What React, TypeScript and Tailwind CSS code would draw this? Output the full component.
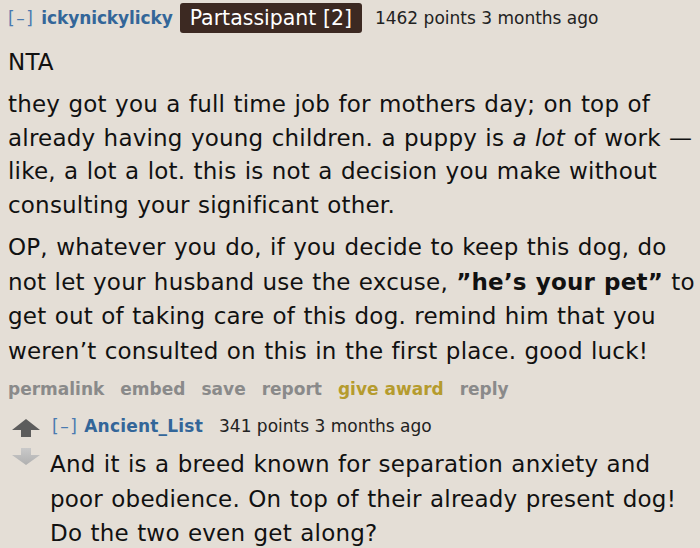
import React from "react";

function Lines({ lines, className }: { lines: React.ReactNode[]; className?: string }) {
  return (
    <p className={className}>
      {lines.map((l, i) => (
        <span key={i} className="block whitespace-nowrap">
          {l}
        </span>
      ))}
    </p>
  );
}

export default function App() {
  return (
    <div className="w-[700px] h-[548px] overflow-hidden bg-[#e4ded6] text-[#111] font-['DejaVu_Sans',Verdana,sans-serif]">
      <div className="pl-[8px] pt-[3px]">
        <div className="flex items-center h-[30px] text-[17px] leading-[24px]">
          <span className="text-[#4a7ab0] tracking-[1.5px]">[–]</span>
          <span className="ml-[7px] font-bold text-[#336699] tracking-[-0.1px]">ickynickylicky</span>
          <span className="ml-[7px] h-[30px] px-[10px] flex items-center rounded-[3px] bg-[#3c2922] text-white text-[20.5px]">
            Partassipant [2]
          </span>
          <span className="ml-[13px] text-[#222]">1462 points 3 months ago</span>
        </div>
        <div className="tracking-[0.2px] [word-spacing:0.8px] text-[23px]">
          <p className="mt-[12px] leading-[34px]">NTA</p>
          <Lines
            className="mt-[9px] leading-[33.5px]"
            lines={[
              "they got you a full time job for mothers day; on top of",
              <>
                already having young children. a puppy is <em>a lot</em> of work —
              </>,
              "like, a lot a lot. this is not a decision you make without",
              "consulting your significant other.",
            ]}
          />
          <Lines
            className="mt-[8px] leading-[34.5px]"
            lines={[
              "OP, whatever you do, if you decide to keep this dog, do",
              <>
                not let your husband use the excuse, <strong>”he’s your pet”</strong> to
              </>,
              "get out of taking care of this dog. remind him that you",
              "weren’t consulted on this in the first place. good luck!",
            ]}
          />
        </div>
        <div className="mt-[9px] flex gap-[16px] text-[17px] leading-[24px] font-bold text-[#8a8a8a]">
          <span>permalink</span>
          <span>embed</span>
          <span>save</span>
          <span>report</span>
          <span className="text-[#b59b2e]">give award</span>
          <span>reply</span>
        </div>
        <div className="mt-[13px] flex">
          <div className="w-[44px] shrink-0 flex flex-col items-start pl-[4px] pt-[5px]">
            <svg width="28" height="18" viewBox="0 0 28 18">
              <path d="M14 0 L28 11 L19 11 L19 18 L9 18 L9 11 L0 11 Z" fill="#5c5c5c" />
            </svg>
            <svg className="mt-[11px]" width="28" height="17" viewBox="0 0 28 17">
              <defs>
                <linearGradient id="dg" x1="0" y1="0" x2="0" y2="1">
                  <stop offset="0" stopColor="#c9c9c9" />
                  <stop offset="1" stopColor="#b0b0b0" />
                </linearGradient>
              </defs>
              <path d="M9 0 L19 0 L19 7 L28 7 L14 17 L0 7 L9 7 Z" fill="url(#dg)" />
            </svg>
          </div>
          <div className="flex-1">
            <div className="flex items-center text-[17px] leading-[24px]">
              <span className="text-[#4a7ab0] tracking-[1.5px]">[–]</span>
              <span className="ml-[6px] font-bold text-[#336699] tracking-[0.2px]">Ancient_List</span>
              <span className="ml-[16px] text-[#222]">341 points 3 months ago</span>
            </div>
            <Lines
              className="mt-[9px] text-[23px] leading-[34.5px] -ml-[2px] tracking-[0.2px] [word-spacing:0.8px]"
              lines={[
                "And it is a breed known for separation anxiety and",
                "poor obedience. On top of their already present dog!",
                "Do the two even get along?",
              ]}
            />
          </div>
        </div>
      </div>
    </div>
  );
}
